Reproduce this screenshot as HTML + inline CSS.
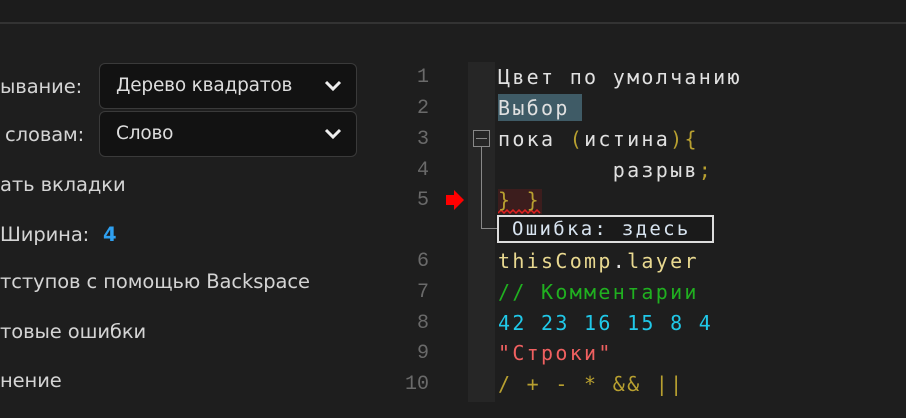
<!DOCTYPE html>
<html><head><meta charset="utf-8"><style>
body{margin:0;width:906px;height:418px;background:#1e1e1e;overflow:hidden;position:relative;font-family:"DejaVu Sans","Liberation Sans",sans-serif;}
.top{position:absolute;left:0;top:0;width:906px;height:22px;background:#1c1c1c;border-bottom:2px solid #333;}
.lbl{position:absolute;color:#d4d4d4;font-size:19.5px;white-space:nowrap;letter-spacing:-0.1px}
.sel{position:absolute;left:99px;width:258px;height:46px;background:#121212;border:1px solid #3a3a3a;border-radius:6px;box-sizing:border-box;color:#ddd;font-size:18.5px;letter-spacing:-0.2px;line-height:44px;padding-left:16px}
.sel svg{position:absolute;right:14px;top:16px}
.gut{position:absolute;left:468px;top:62px;width:27px;height:340px;background:#262626}
.ln{position:absolute;left:395px;width:34px;text-align:right;color:#6a6a6a;font-family:"Liberation Mono","DejaVu Sans Mono",monospace;font-size:20px}
.cd{position:absolute;left:498px;font-family:"DejaVu Sans Mono","Liberation Mono",monospace;font-size:20px;letter-spacing:2.3px;color:#e0e0e0;white-space:pre}
</style></head><body>
<div class="top"></div>
<div class="lbl" style="left:0;top:75px">ывание:</div>
<div class="sel" style="top:63px">Дерево квадратов<svg width="18" height="12" viewBox="0 0 18 12"><path d="M2 2 L9 9 L16 2" stroke="#eee" stroke-width="3" fill="none"/></svg></div>
<div class="lbl" style="left:5px;top:123px">словам:</div>
<div class="sel" style="top:111px">Слово<svg width="18" height="12" viewBox="0 0 18 12"><path d="M2 2 L9 9 L16 2" stroke="#eee" stroke-width="3" fill="none"/></svg></div>
<div class="lbl" style="left:0;top:173px">ать вкладки</div>
<div class="lbl" style="left:0;top:223px">Ширина:</div>
<div class="lbl" style="left:103px;top:223px;color:#2fa0f0;font-weight:bold">4</div>
<div class="lbl" style="left:0;top:270px">тступов с помощью Backspace</div>
<div class="lbl" style="left:0;top:320px">товые ошибки</div>
<div class="lbl" style="left:0;top:369px">нение</div>

<div class="gut"></div>
<div class="ln" style="top:66px">1</div>
<div class="ln" style="top:97px">2</div>
<div class="ln" style="top:128px">3</div>
<div class="ln" style="top:159px">4</div>
<div class="ln" style="top:189px">5</div>
<div class="ln" style="top:250px">6</div>
<div class="ln" style="top:281px">7</div>
<div class="ln" style="top:312px">8</div>
<div class="ln" style="top:342px">9</div>
<div class="ln" style="top:373px">10</div>
<svg style="position:absolute;left:444px;top:189px" width="22" height="22"><path d="M2 6 H10 V1 L20 11 L10 21 V16 H2 Z" fill="#f00"/></svg>
<div style="position:absolute;left:473px;top:130px;width:17px;height:17px;border:1px solid #888;box-sizing:border-box"></div>
<div style="position:absolute;left:476px;top:138px;width:11px;height:1px;background:#888"></div>
<div style="position:absolute;left:481px;top:147px;width:1px;height:82px;background:#888"></div>
<div style="position:absolute;left:481px;top:228px;width:16px;height:1px;background:#888"></div>
<div style="position:absolute;left:498px;top:94px;width:84px;height:27px;background:#3f5b66"></div>
<div style="position:absolute;left:498px;top:189px;width:44px;height:25px;background:#3c1d1d"></div>
<svg style="position:absolute;left:498px;top:209px" width="44" height="6"><path d="M0 4 L3 1 L6 4 L9 1 L12 4 L15 1 L18 4 L21 1 L24 4 L27 1 L30 4 L33 1 L36 4 L39 1 L42 4" stroke="#e02020" stroke-width="1.5" fill="none"/></svg>
<div style="position:absolute;left:497px;top:215px;width:217px;height:28px;border:2px solid #ddd;box-sizing:border-box;background:#1a1a1a"></div>
<div class="cd" style="top:65px">Цвет по умолчанию</div>
<div class="cd" style="top:96px">Выбор</div>
<div class="cd" style="top:127px">пока <span style="color:#b8a030">(</span>истина<span style="color:#b8a030">){</span></div>
<div class="cd" style="top:158px">        разрыв<span style="color:#b8a030">;</span></div>
<div class="cd" style="top:188px;color:#b8a030">} }</div>
<div class="cd" style="top:218px;left:512px;color:#d8e4f0;font-size:19px">Ошибка: здесь</div>
<div class="cd" style="top:249px;color:#e8d890">thisComp<span style="color:#e0e0e0">.</span>layer</div>
<div class="cd" style="top:280px;color:#20b020">// Комментарии</div>
<div class="cd" style="top:311px;color:#20c8e8">42 23 16 15 8 4</div>
<div class="cd" style="top:341px;color:#f06060">"Строки"</div>
<div class="cd" style="top:372px;color:#b8a030">/ + - * &amp;&amp; ||</div>
</body></html>
